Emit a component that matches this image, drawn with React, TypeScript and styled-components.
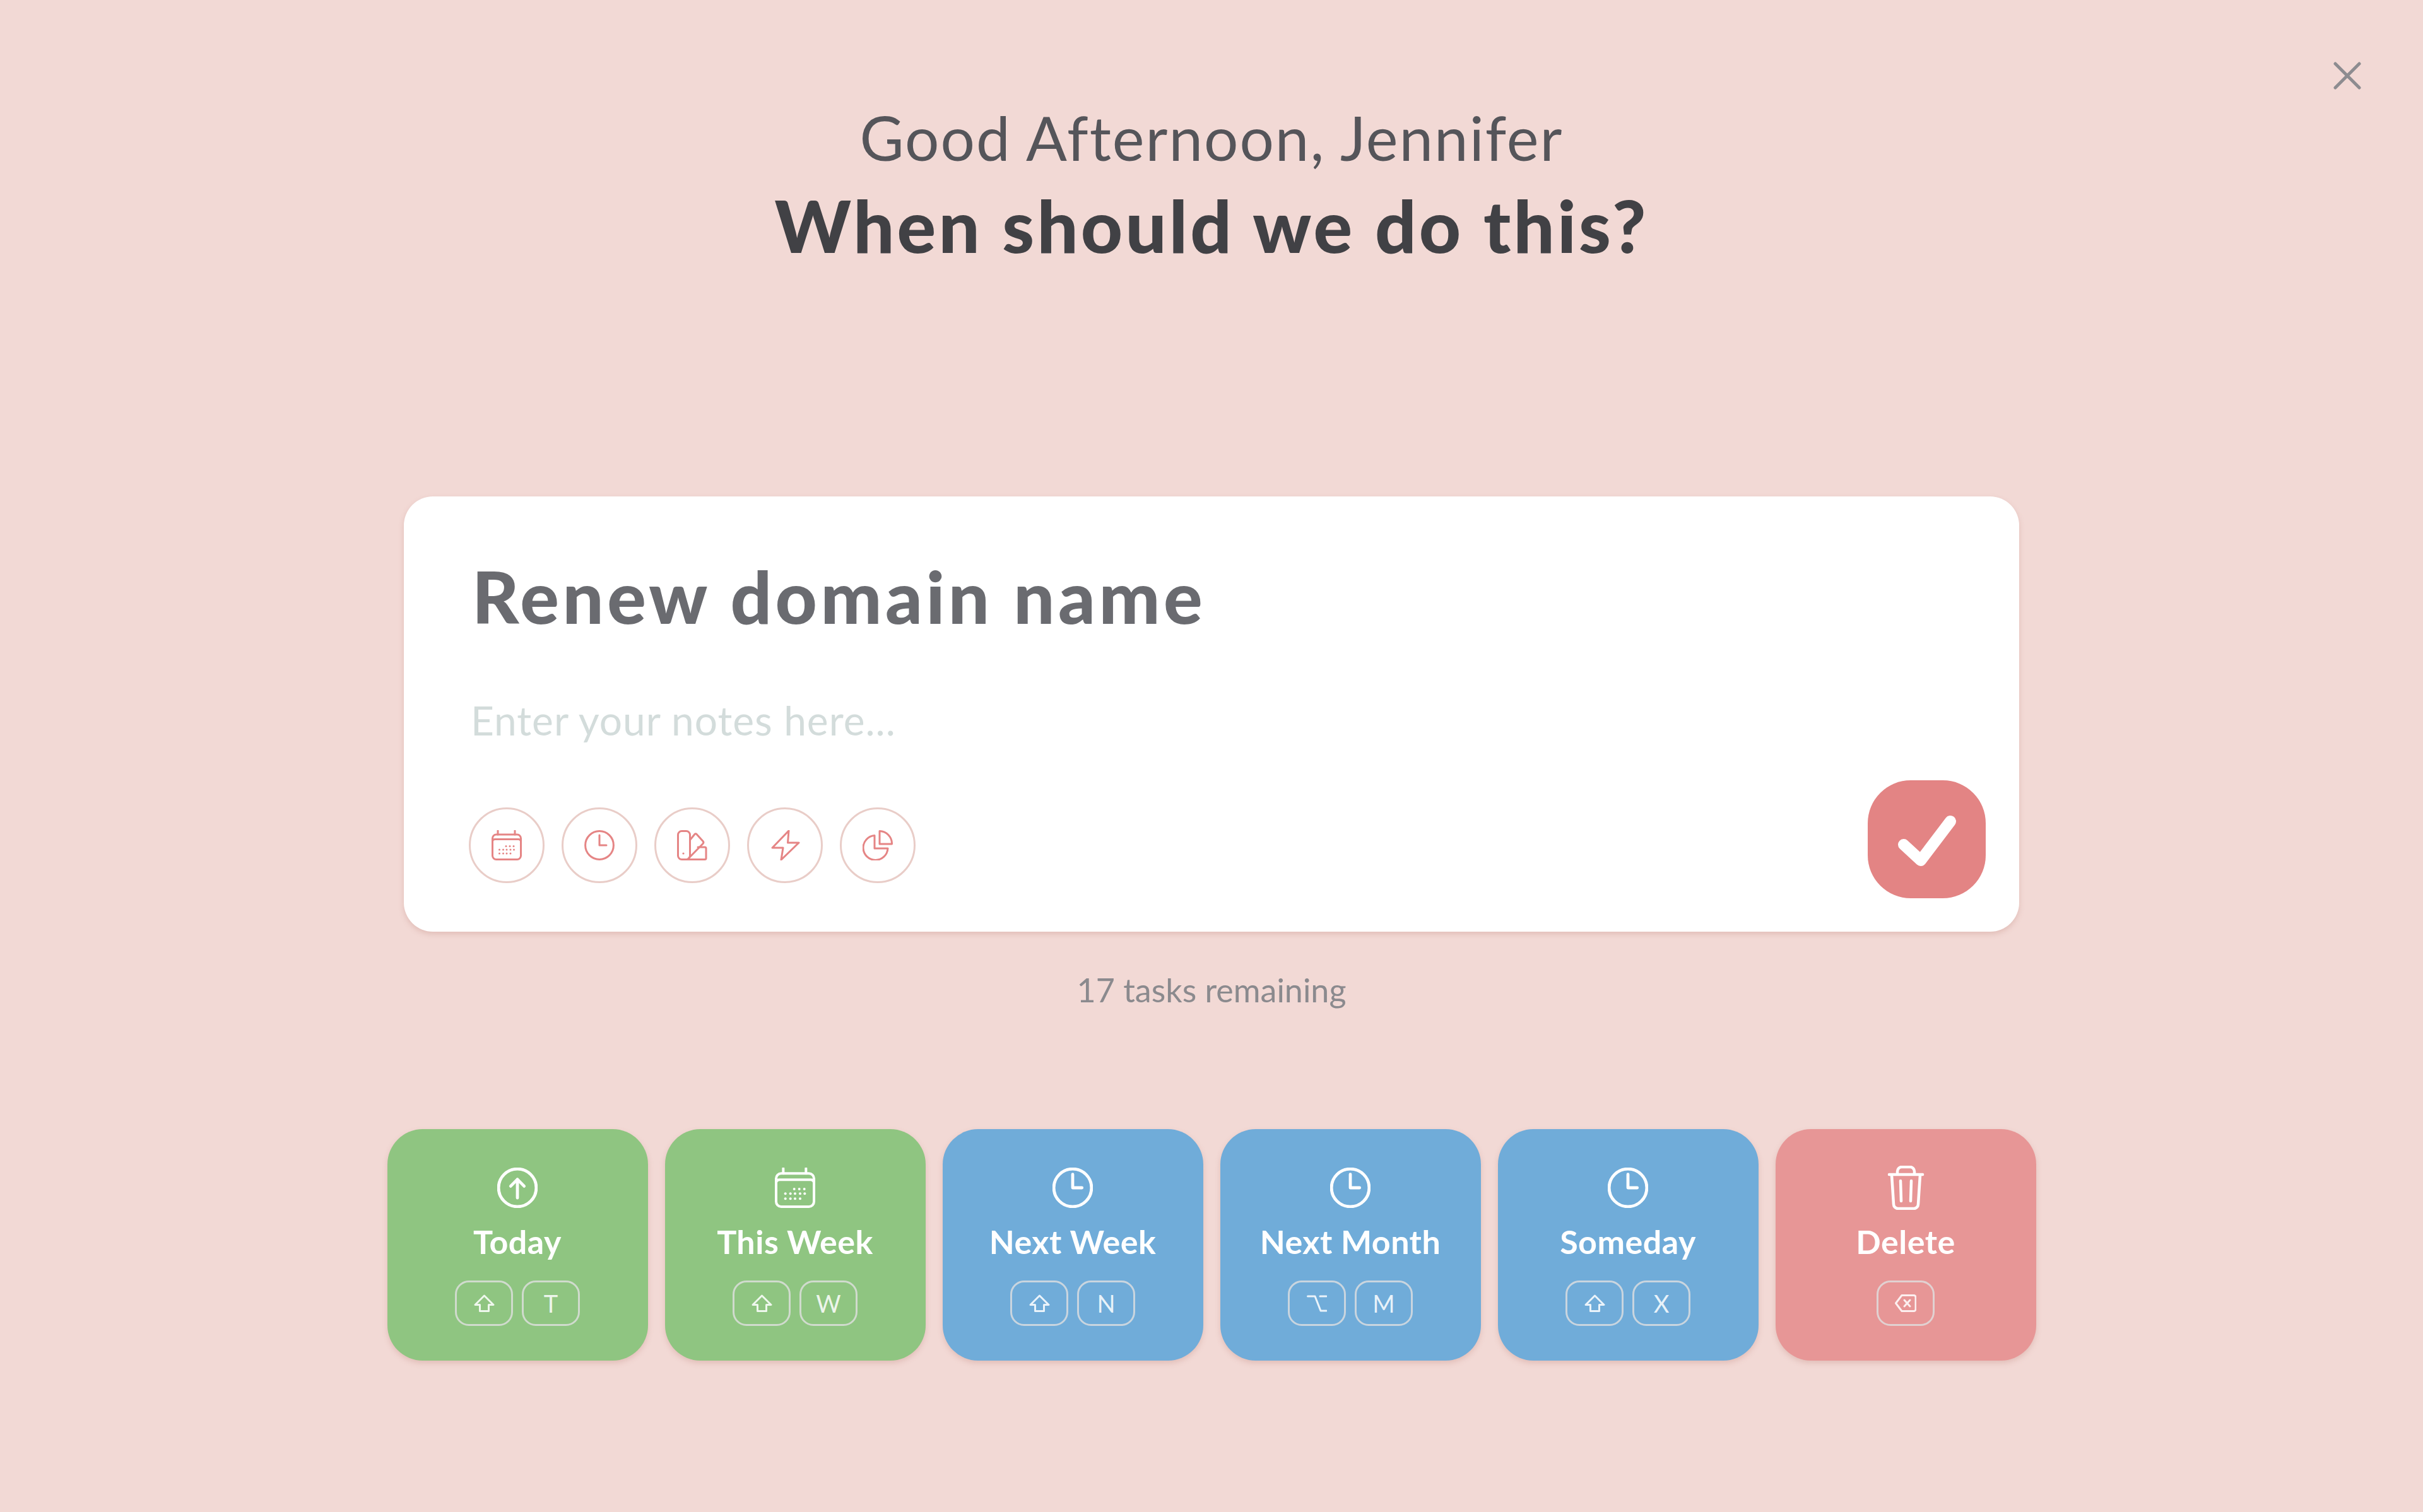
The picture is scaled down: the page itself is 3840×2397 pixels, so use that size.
import React, { ReactNode } from "react";
import styled, { createGlobalStyle } from "styled-components";

const GlobalStyle = createGlobalStyle`
  html, body {
    margin: 0;
    padding: 0;
    background: #f2d9d5;
    font-family: Lato, "Noto Sans", sans-serif;
  }
`;

const Page = styled.div`
  position: relative;
  width: 3840px;
  height: 2397px;
  overflow: hidden;
  display: flex;
  flex-direction: column;
  align-items: center;
  background: #f2d9d5;
`;

const CloseButton = styled.button`
  position: absolute;
  top: 98px;
  right: 98px;
  width: 44px;
  height: 44px;
  padding: 0;
  border: 0;
  background: none;
  display: block;
`;

const Header = styled.header`
  margin-top: 156px;
  text-align: center;
`;

const Greeting = styled.div`
  font-size: 96px;
  line-height: 124px;
  font-weight: 400;
  color: #55555a;
  letter-spacing: 2px;
`;

const Question = styled.h1`
  margin: 6px 0 0;
  font-size: 115px;
  line-height: 140px;
  font-weight: 900;
  color: #414145;
  letter-spacing: 4.2px;
`;

const Card = styled.section`
  width: 2560px;
  height: 690px;
  box-sizing: border-box;
  margin-top: 361px;
  padding: 0 53px 53px 103px;
  background: #fff;
  border-radius: 46px;
  box-shadow: 0 4px 8px rgba(190, 130, 120, 0.3);
  display: flex;
  flex-direction: column;
`;

const TaskTitle = styled.h2`
  margin: 87px 0 0 5px;
  font-size: 115px;
  line-height: 140px;
  font-weight: 900;
  color: #6a6b70;
  letter-spacing: 5.5px;
`;

const Notes = styled.div`
  margin: 88px 0 0 3px;
  font-size: 64px;
  line-height: 80px;
  color: #d3dcdb;
  letter-spacing: 1px;
`;

const CardFooter = styled.div`
  margin-top: auto;
  display: flex;
  justify-content: space-between;
  align-items: flex-end;
`;

const ToolRow = styled.div`
  display: flex;
  gap: 27px;
  margin-bottom: 24px;
`;

const ToolButton = styled.button`
  width: 120px;
  height: 120px;
  box-sizing: border-box;
  padding: 0;
  border: 3px solid #e9cdc8;
  border-radius: 50%;
  background: #fff;
  color: #e58585;
  display: flex;
  align-items: center;
  justify-content: center;
`;

const DoneButton = styled.button`
  width: 187px;
  height: 187px;
  padding: 0;
  border: 0;
  border-radius: 68px;
  background: #e38484;
  display: block;
`;

const Remaining = styled.div`
  margin-top: 60px;
  font-size: 52px;
  line-height: 64px;
  color: #8b8a8e;
`;

const TileRow = styled.div`
  margin-top: 189px;
  display: flex;
  gap: 27px;
`;

const Tile = styled.button<{ $color: string }>`
  width: 413px;
  height: 367px;
  box-sizing: border-box;
  padding: 61px 0 0;
  border: 0;
  border-radius: 56px;
  background: ${(p) => p.$color};
  box-shadow: 0 4px 8px rgba(190, 130, 120, 0.3);
  color: #fff;
  font-family: inherit;
  display: flex;
  flex-direction: column;
  align-items: center;
`;

const IconBox = styled.div`
  width: 70px;
  height: 64px;
  display: flex;
  align-items: center;
  justify-content: center;
`;

const TileLabel = styled.div`
  margin-top: 23px;
  font-size: 52px;
  line-height: 60px;
  font-weight: 700;
  letter-spacing: 0.5px;
`;

const Keys = styled.div`
  margin-top: 32px;
  display: flex;
  gap: 14px;
`;

const Key = styled.div`
  width: 92px;
  height: 72px;
  box-sizing: border-box;
  border: 3px solid rgba(224, 224, 224, 0.8);
  border-radius: 22px;
  display: flex;
  align-items: center;
  justify-content: center;
  font-size: 38px;
  font-weight: 400;
  color: rgba(255, 255, 255, 0.85);
`;

const Glyph = styled.svg<{ $stroke?: number }>`
  display: block;
  fill: none;
  stroke: currentColor;
  stroke-width: ${(p) => p.$stroke ?? 3};
  stroke-linecap: round;
  stroke-linejoin: round;
`;

type IconProps = { size: number; stroke?: number };

const CalendarIcon = ({ size, stroke }: IconProps) => {
  const dots = [
    [23, 25.5], [29, 25.5], [35, 25.5],
    [12.5, 31], [18.5, 31], [24, 31], [30, 31], [35.5, 31],
    [12.5, 37], [18.5, 37], [24, 37], [30, 37],
  ];
  return (
    <Glyph width={size} height={size} viewBox="0 0 48 48" $stroke={stroke}>
      <path d="M10 1v6M37 1v6" />
      <rect x="1.5" y="7" width="45" height="39.5" rx="6" />
      <path d="M1.5 17.5a4 4 0 0 1 4-3h37a4 4 0 0 1 4 3" />
      {dots.map(([x, y]) => (
        <circle key={`${x}-${y}`} cx={x} cy={y} r="1.5" fill="currentColor" stroke="none" />
      ))}
    </Glyph>
  );
};

const ClockIcon = ({ size, stroke }: IconProps) => (
  <Glyph width={size} height={size} viewBox="0 0 48 48" $stroke={stroke}>
    <circle cx="24" cy="24" r="22.4" />
    <path d="M24 8v16h11" />
  </Glyph>
);

const SwatchIcon = ({ size, stroke }: IconProps) => (
  <Glyph width={size} height={size} viewBox="0 0 48 48" $stroke={stroke}>
    <rect x="1.5" y="1.5" width="19" height="45" rx="6" />
    <circle cx="10" cy="37" r="1.6" fill="currentColor" stroke="none" />
    <path d="M21 15l7-8.5a2 2 0 0 1 3 0l10 11a3 3 0 0 1 0 4L18 45" />
    <path d="M33 27h11a2 2 0 0 1 2 2v15.5a2 2 0 0 1-2 2H12" />
  </Glyph>
);

const BoltIcon = ({ size, stroke }: IconProps) => (
  <Glyph width={size} height={size} viewBox="0 0 48 48" $stroke={stroke}>
    <path d="M30 1L4 28h17l-3 19L46 20H28.5z" />
  </Glyph>
);

const PieIcon = ({ size, stroke }: IconProps) => (
  <Glyph width={size} height={size} viewBox="0 0 48 48" $stroke={stroke}>
    <path d="M27 1.5V22h19.5A20 20 0 0 0 27 1.5z" />
    <path d="M19 8.5A19.5 19.5 0 1 0 40 29H19z" />
  </Glyph>
);

const ArrowCircleIcon = ({ size, stroke }: IconProps) => (
  <Glyph width={size} height={size} viewBox="0 0 48 48" $stroke={stroke}>
    <circle cx="24" cy="24" r="22.4" />
    <path d="M24 36V14M16 22l8-8 8 8" />
  </Glyph>
);

const TrashIcon = () => (
  <Glyph width={59} height={70} viewBox="0 0 59 70" $stroke={4.5}>
    <path d="M3 14h53" />
    <path d="M16 13V9a7 7 0 0 1 7-7h13a7 7 0 0 1 7 7v4" />
    <path d="M7 15l3 46a7 7 0 0 0 7 7h25a7 7 0 0 0 7-7l3-46" />
    <path d="M21 24l1 32M38 24l-1 32" />
  </Glyph>
);

const ShiftIcon = () => (
  <Glyph width={33} height={28} viewBox="0 0 33 28">
    <path d="M16.5 2L31 16.5h-7.5v10h-14v-10H2z" />
  </Glyph>
);

const OptionIcon = () => (
  <Glyph width={32} height={27} viewBox="0 0 32 27">
    <path d="M1.5 2H13l9 23h9M21 2h10" />
  </Glyph>
);

const BackspaceIcon = () => (
  <Glyph width={34} height={28} viewBox="0 0 34 28">
    <path d="M11 1.5h19a3 3 0 0 1 3 3v19a3 3 0 0 1-3 3H11L1.5 14z" />
    <path d="M15 9l9 10M24 9l-9 10" />
  </Glyph>
);

const GREEN = "#8fc581";
const BLUE = "#70acd9";
const RED = "#e79696";

interface TileData {
  label: string;
  color: string;
  icon: ReactNode;
  keys: ReactNode[];
}

const tiles: TileData[] = [
  { label: "Today", color: GREEN, icon: <ArrowCircleIcon size={64} stroke={3.6} />, keys: [<ShiftIcon />, "T"] },
  { label: "This Week", color: GREEN, icon: <CalendarIcon size={64} stroke={3} />, keys: [<ShiftIcon />, "W"] },
  { label: "Next Week", color: BLUE, icon: <ClockIcon size={64} stroke={3.6} />, keys: [<ShiftIcon />, "N"] },
  { label: "Next Month", color: BLUE, icon: <ClockIcon size={64} stroke={3.6} />, keys: [<OptionIcon />, "M"] },
  { label: "Someday", color: BLUE, icon: <ClockIcon size={64} stroke={3.6} />, keys: [<ShiftIcon />, "X"] },
  { label: "Delete", color: RED, icon: <TrashIcon />, keys: [<BackspaceIcon />] },
];

const App = () => {
  return (
    <Page>
      <GlobalStyle />
      <CloseButton>
        <svg width="44" height="44" viewBox="0 0 44 44" fill="none" stroke="#8d8c90" strokeWidth="5" strokeLinecap="round">
          <path d="M3 3l38 38M41 3L3 41" />
        </svg>
      </CloseButton>
      <Header>
        <Greeting>Good Afternoon, Jennifer</Greeting>
        <Question>When should we do this?</Question>
      </Header>
      <Card>
        <TaskTitle>Renew domain name</TaskTitle>
        <Notes>Enter your notes here...</Notes>
        <CardFooter>
          <ToolRow>
            <ToolButton><CalendarIcon size={48} /></ToolButton>
            <ToolButton><ClockIcon size={48} /></ToolButton>
            <ToolButton><SwatchIcon size={48} /></ToolButton>
            <ToolButton><BoltIcon size={48} /></ToolButton>
            <ToolButton><PieIcon size={48} /></ToolButton>
          </ToolRow>
          <DoneButton>
            <svg width="187" height="187" viewBox="0 0 187 187" fill="none" stroke="#fff" strokeWidth="18" strokeLinecap="round" strokeLinejoin="round">
              <path d="M57 102l27 25 47-62" />
            </svg>
          </DoneButton>
        </CardFooter>
      </Card>
      <Remaining>17 tasks remaining</Remaining>
      <TileRow>
        {tiles.map((tile) => (
          <Tile key={tile.label} $color={tile.color}>
            <IconBox>{tile.icon}</IconBox>
            <TileLabel>{tile.label}</TileLabel>
            <Keys>
              {tile.keys.map((k, i) => (
                <Key key={i}>{k}</Key>
              ))}
            </Keys>
          </Tile>
        ))}
      </TileRow>
    </Page>
  );
};

export default App;
